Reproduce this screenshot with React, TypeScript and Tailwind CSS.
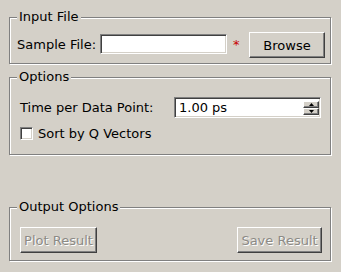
import React from 'react';

const sunken =
  'border-t border-l border-t-[#808080] border-l-[#808080] border-b border-r border-b-white border-r-white shadow-[inset_1px_1px_0_#404040,inset_-1px_-1px_0_#d4d0c8]';
const raised =
  'border-t border-l border-t-white border-l-white border-b border-r border-b-[#404040] border-r-[#404040] shadow-[inset_-1px_-1px_0_#808080]';

function Group({ title, className, children }: { title: string; className?: string; children: React.ReactNode }) {
  // etched frame: dark line with a white line offset by one pixel
  return (
    <div
      className={`relative border border-[#808080] shadow-[1px_1px_0_white,inset_1px_1px_0_white] ${className ?? ''}`}
    >
      <span className="absolute left-[7px] top-[-9px] bg-[#d4d0c8] px-[2px] leading-[15px]">{title}</span>
      {children}
    </div>
  );
}

function Button({ label, disabled, className }: { label: string; disabled?: boolean; className?: string }) {
  return (
    <button
      disabled={disabled}
      className={`${raised} flex h-[26px] items-center justify-center bg-[#d4d0c8] text-[13px] leading-[15px] ${
        disabled ? 'text-[#8c8a85] [text-shadow:1px_1px_0_white]' : 'text-black'
      } ${className ?? ''}`}
    >
      {label}
    </button>
  );
}

export default function App() {
  return (
    <div
      className="flex h-[272px] w-[341px] flex-col bg-[#d4d0c8] px-[9px] pt-[17px] pb-[11px] text-[13px] leading-[15px] text-black"
      style={{ fontFamily: '"DejaVu Sans", sans-serif' }}
    >
      <Group title="Input File" className="w-[322px] pt-[14px] pr-[5px] pb-[5px] pl-[7px]">
        <div className="flex h-[26px] items-start">
          <span className="mt-[5px] w-[83px]">Sample File:</span>
          <div className={`${sunken} mt-[2px] h-[20px] w-[127px] bg-white`} />
          <span className="mt-[5px] ml-[6px] text-[13px] text-[#c80000]">*</span>
          <Button label="Browse" className="ml-auto w-[76px]" />
        </div>
      </Group>

      <Group title="Options" className="mt-[13px] w-[322px] pt-[19px] pr-[9px] pb-[14px] pl-[10px]">
        <div className="flex h-[21px] items-center">
          <span className="w-[154px]">Time per Data Point:</span>
          <div className={`${sunken} flex h-[21px] w-[147px] items-center bg-white`}>
            <span className="flex-1 pl-[4px]">1.00 ps</span>
            <div className="mr-[1px] flex flex-col gap-0">
              <div className={`${raised} flex h-[7px] w-[16px] items-center justify-center bg-[#d4d0c8]`}>
                <svg width="5" height="3" viewBox="0 0 5 3">
                  <path d="M2.5 0 L5 3 L0 3 Z" fill="black" />
                </svg>
              </div>
              <div className={`${raised} flex h-[7px] w-[16px] items-center justify-center bg-[#d4d0c8]`}>
                <svg width="5" height="3" viewBox="0 0 5 3">
                  <path d="M0 0 L5 0 L2.5 3 Z" fill="black" />
                </svg>
              </div>
            </div>
          </div>
        </div>
        <div className="mt-[9px] flex h-[13px] items-center">
          <div className={`${sunken} h-[13px] w-[13px] bg-white`} />
          <span className="ml-[5px]">Sort by Q Vectors</span>
        </div>
      </Group>

      <Group title="Output Options" className="mt-auto w-[322px] pt-[19px] pr-[8px] pb-[7px] pl-[10px]">
        <div className="flex h-[26px] items-center justify-between">
          <Button label="Plot Result" disabled className="w-[77px]" />
          <Button label="Save Result" disabled className="w-[85px]" />
        </div>
      </Group>
    </div>
  );
}
